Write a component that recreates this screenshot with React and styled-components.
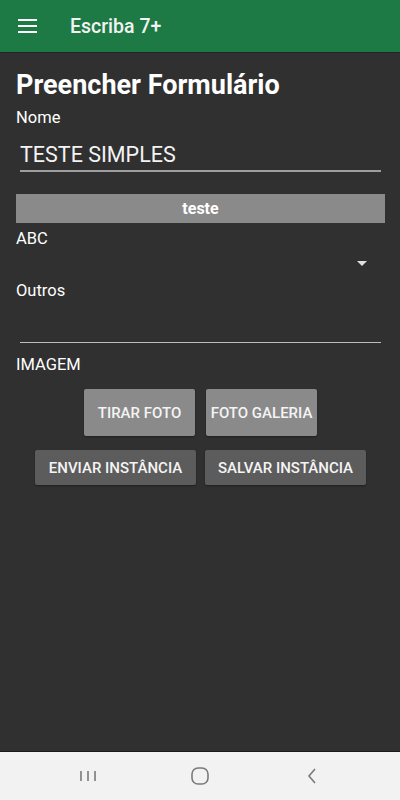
import React from 'react';
import styled, { createGlobalStyle } from 'styled-components';

const GlobalStyle = createGlobalStyle`
  html, body { margin: 0; padding: 0; height: 100%; }
  body { background: #303030; font-family: Roboto, "Noto Sans", sans-serif; }
  #root { height: 100%; }
`;

const Screen = styled.div`
  width: 400px;
  height: 800px;
  display: flex;
  flex-direction: column;
  background: #303030;
  color: #fff;
`;

const AppBar = styled.header`
  height: 52px;
  background: #1d7a45;
  display: flex;
  align-items: center;
  padding-left: 18px;
  box-shadow: 0 1px 0 #232323;
`;

const MenuButton = styled.div`
  width: 19px;
  display: flex;
  flex-direction: column;
  gap: 4px;
  margin-right: 33px;
  span { display: block; height: 2px; background: #fff; }
`;

const AppTitle = styled.h1`
  margin: 0;
  font-size: 19.5px;
  font-weight: 500;
  color: #f2f2f2;
`;

const Content = styled.main`
  flex: 1;
  padding: 18px 15px 0 16px;
  display: flex;
  flex-direction: column;
`;

const PageTitle = styled.h2`
  margin: 0;
  font-size: 27px;
  font-weight: 700;
  line-height: 30px;
`;

const Label = styled.div`
  font-size: 16.5px;
  line-height: 19px;
  margin-top: ${p => p.$mt || 0}px;
`;

const TextInput = styled.div`
  margin: 0 4px 0 4px;
  padding-top: ${p => p.$pt || 0}px;
  height: ${p => p.$h}px;
  box-sizing: border-box;
  font-size: 21.5px;
  line-height: 26px;
  color: #f4f4f4;
  border-bottom: ${p => p.$thick ? '2px solid #9e9e9e' : '1px solid #bdbdbd'};
`;

const WideButton = styled.div`
  margin-top: 22px;
  height: 29px;
  background: #8a8a8a;
  display: flex;
  align-items: center;
  justify-content: center;
  font-weight: 700;
  font-size: 16px;
`;

const Spinner = styled.div`
  height: 31px;
  display: flex;
  justify-content: flex-end;
  align-items: center;
  padding-right: 18px;
`;

const Caret = styled.div`
  width: 0;
  height: 0;
  border-left: 5px solid transparent;
  border-right: 5px solid transparent;
  border-top: 5px solid #e0e0e0;
`;

const ButtonRow = styled.div`
  display: flex;
  justify-content: center;
  gap: ${p => p.$gap}px;
  margin-top: ${p => p.$mt}px;
`;

const ActionButton = styled.div`
  width: ${p => p.$w}px;
  height: ${p => p.$h}px;
  background: ${p => p.$bg};
  border-radius: 2px;
  display: flex;
  align-items: center;
  justify-content: center;
  font-size: 15px;
  font-weight: 500;
  color: #f4f4f4;
  box-shadow: 0 1px 2px rgba(0,0,0,0.35);
`;

const NavBar = styled.nav`
  height: 48px;
  background: #f2f2f2;
  border-top: 1px solid #1a1a1a;
  display: flex;
  justify-content: center;
  align-items: center;
  gap: 92px;
`;

const NavIcon = styled.svg`
  width: 20px;
  height: 20px;
  stroke: #7a7a7a;
  fill: none;
  stroke-width: 1.6;
`;

export default function App() {
  return (
    <>
      <GlobalStyle />
      <Screen>
        <AppBar>
          <MenuButton><span /><span /><span /></MenuButton>
          <AppTitle>Escriba 7+</AppTitle>
        </AppBar>
        <Content>
          <PageTitle>Preencher Formulário</PageTitle>
          <Label $mt={8}>Nome</Label>
          <TextInput $h={45} $pt={15} $thick>TESTE SIMPLES</TextInput>
          <WideButton>teste</WideButton>
          <Label $mt={6}>ABC</Label>
          <Spinner><Caret /></Spinner>
          <Label $mt={2}>Outros</Label>
          <TextInput $h={43} />
          <Label $mt={12}>IMAGEM</Label>
          <ButtonRow $gap={11} $mt={15}>
            <ActionButton $w={111} $h={47} $bg="#8a8a8a">TIRAR FOTO</ActionButton>
            <ActionButton $w={111} $h={47} $bg="#8a8a8a">FOTO GALERIA</ActionButton>
          </ButtonRow>
          <ButtonRow $gap={9} $mt={14}>
            <ActionButton $w={161} $h={35} $bg="#5c5c5c">ENVIAR INSTÂNCIA</ActionButton>
            <ActionButton $w={161} $h={35} $bg="#5c5c5c">SALVAR INSTÂNCIA</ActionButton>
          </ButtonRow>
        </Content>
        <NavBar>
          <NavIcon viewBox="0 0 20 20">
            <path d="M3 5v10M10 5v10M17 5v10" />
          </NavIcon>
          <NavIcon viewBox="0 0 20 20">
            <rect x="2" y="2" width="16" height="16" rx="6" />
          </NavIcon>
          <NavIcon viewBox="0 0 20 20">
            <path d="M13 3l-6 7 6 7" />
          </NavIcon>
        </NavBar>
      </Screen>
    </>
  );
}
